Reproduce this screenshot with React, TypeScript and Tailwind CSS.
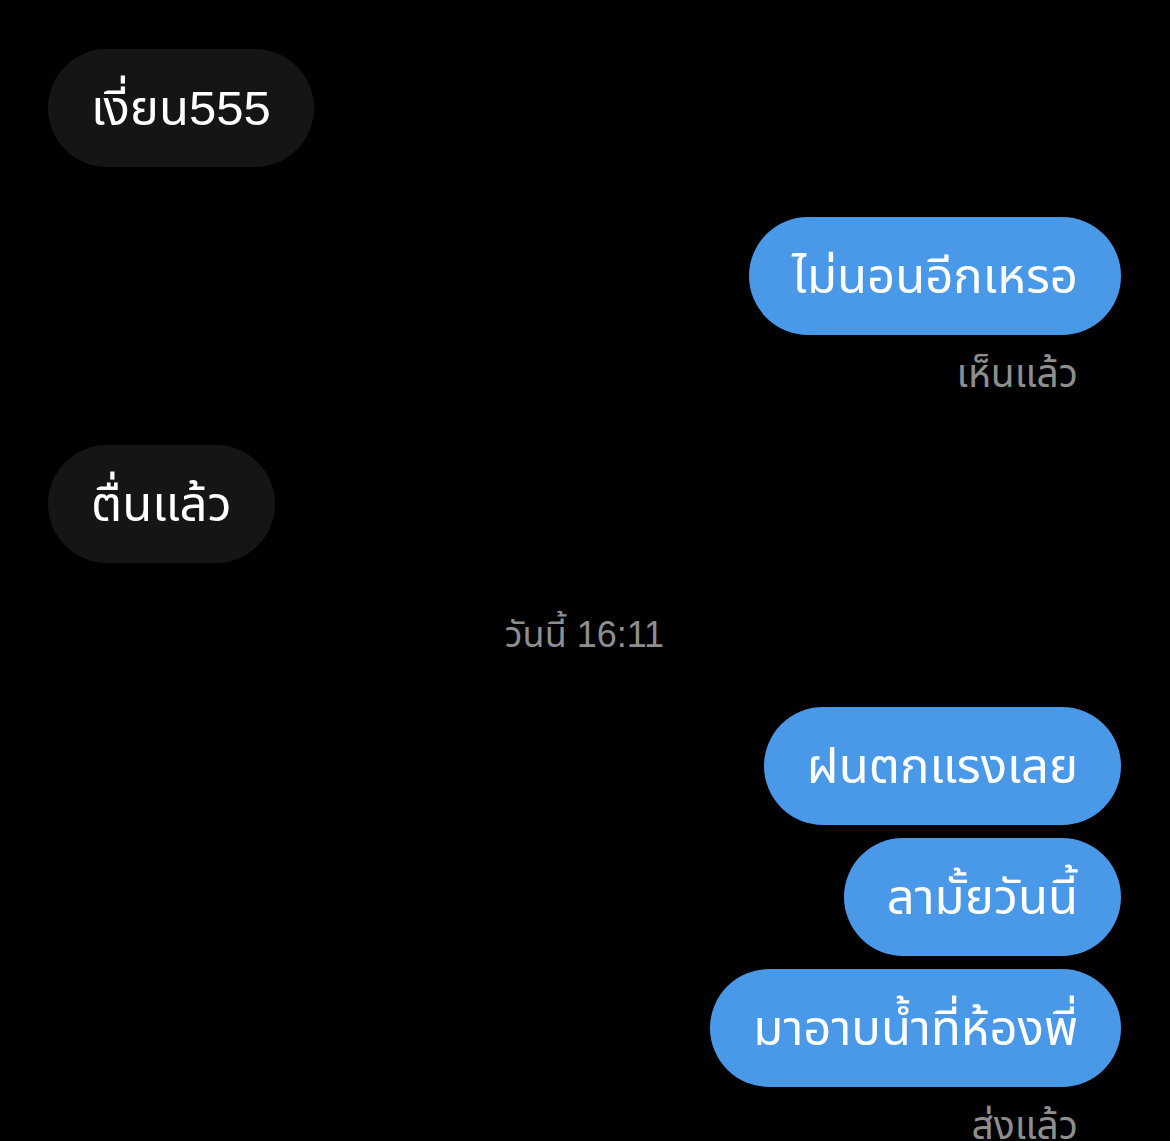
const FONT = {
  fontFamily: '"Liberation Sans", "Noto Sans Thai", "Noto Sans", "DejaVu Sans", sans-serif',
}

function Bubble({ text, mine }: { text: string; mine?: boolean }) {
  return (
    <div
      className={`h-[118px] flex items-center px-[43px] rounded-full text-[49px] leading-none text-white whitespace-nowrap ${
        mine ? "bg-[#4a99e8] self-end" : "bg-[#151515] self-start"
      }`}
    >
      {text}
    </div>
  )
}

function Status({ text }: { text: string }) {
  return (
    <div className="self-end pr-[43px] text-[39px] leading-[44px] text-[#8e8e8e]">{text}</div>
  )
}

export default function App() {
  return (
    <div className="w-[1170px] h-[1141px] bg-black overflow-hidden" style={FONT}>
      <div className="flex flex-col pt-[49px] pl-[48px] pr-[49px]">
        <Bubble text="เงี่ยน555" />

        <div className="mt-[50px] flex flex-col">
          <Bubble text="ไม่นอนอีกเหรอ" mine />
          <div className="mt-[17px] flex flex-col">
            <Status text="เห็นแล้ว" />
          </div>
        </div>

        <div className="mt-[49px] flex flex-col">
          <Bubble text="ตื่นแล้ว" />
        </div>

        <div className="mt-[50px] text-center text-[36px] leading-[44px] text-[#8e8e8e]">
          วันนี้ 16:11
        </div>

        <div className="mt-[50px] flex flex-col gap-[13px]">
          <Bubble text="ฝนตกแรงเลย" mine />
          <Bubble text="ลามั้ยวันนี้" mine />
          <Bubble text="มาอาบน้ำที่ห้องพี่" mine />
        </div>

        <div className="mt-[17px] flex flex-col">
          <Status text="ส่งแล้ว" />
        </div>
      </div>
    </div>
  )
}
